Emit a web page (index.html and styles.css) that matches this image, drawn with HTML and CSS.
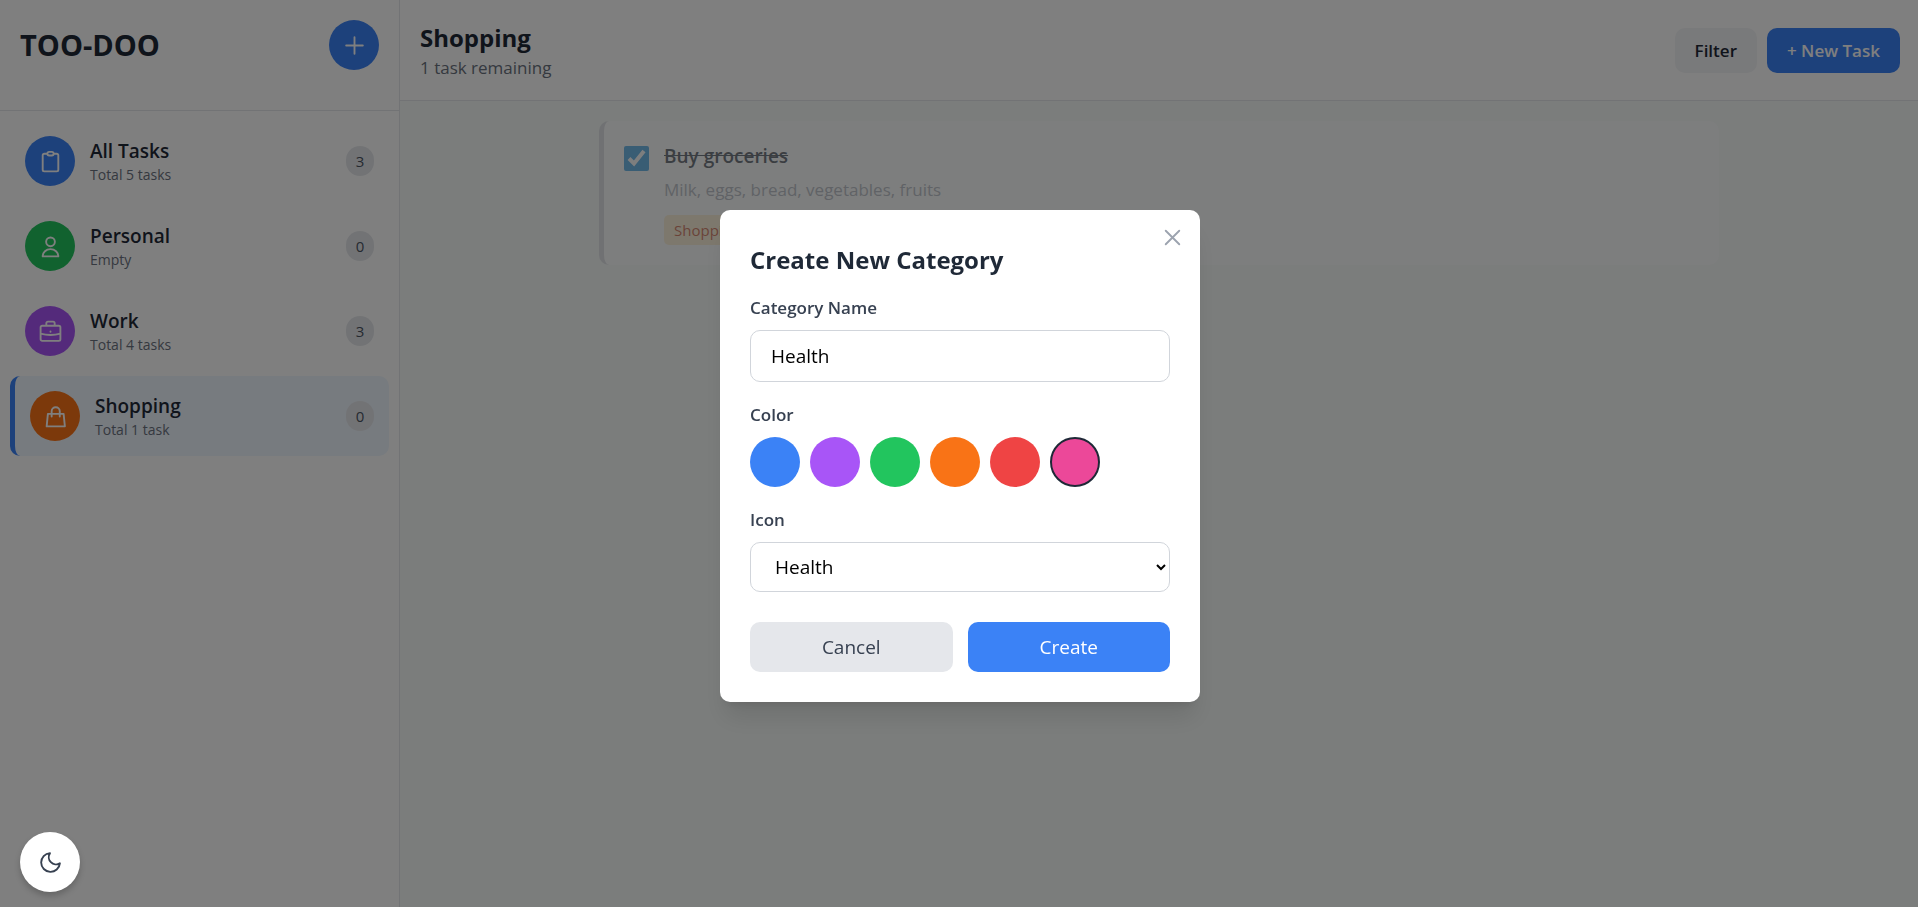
FILE: index.html
```html
<!DOCTYPE html>
<html lang="en">
<head>
    <meta charset="UTF-8">
    <meta name="viewport" content="width=device-width, initial-scale=1.0">
    <title>TOO-DOO</title>
    <link rel="stylesheet" href="styles.css">
</head>
<body>
    <div class="app">
        <aside class="sidebar">
            <div class="sidebar-header">
                <h1>TOO-DOO</h1>
                <button class="add-category" type="button" aria-label="Add category">
                    <svg class="icon" viewBox="0 0 24 24"><path d="M12 4v16m8-8H4"/></svg>
                </button>
            </div>
            <nav class="category-list">
                <a class="category" href="#all">
                    <span class="category-icon blue">
                        <svg class="icon" viewBox="0 0 24 24"><path d="M9 4.500H6A1.500 1.500 0 0 0 4.500 6v14A1.500 1.500 0 0 0 6 21.500h12a1.500 1.500 0 0 0 1.500-1.500V6A1.500 1.500 0 0 0 18 4.500h-3M10.700 2.800h2.600a1.700 1.700 0 0 1 0 3.400h-2.600a1.700 1.700 0 0 1 0-3.400z"/></svg>
                    </span>
                    <span class="category-text">
                        <span class="category-name">All Tasks</span>
                        <span class="category-total">Total 5 tasks</span>
                    </span>
                    <span class="count">3</span>
                </a>
                <a class="category" href="#personal">
                    <span class="category-icon green">
                        <svg class="icon" viewBox="0 0 24 24"><circle cx="12" cy="7.500" r="4.200"/><path d="M4.500 21.500c0-4 3.300-7 7.500-7s7.500 3 7.500 7z"/></svg>
                    </span>
                    <span class="category-text">
                        <span class="category-name">Personal</span>
                        <span class="category-total">Empty</span>
                    </span>
                    <span class="count">0</span>
                </a>
                <a class="category" href="#work">
                    <span class="category-icon purple">
                        <svg class="icon" viewBox="0 0 24 24"><path d="M4 6.500h16A1.500 1.500 0 0 1 21.500 8v11.500A1.500 1.500 0 0 1 20 21H4a1.500 1.500 0 0 1-1.500-1.500V8A1.500 1.500 0 0 1 4 6.500zM8 6.500V4a1.500 1.500 0 0 1 1.500-1.500h5A1.500 1.500 0 0 1 16 4v2.500M2.500 14c6 1.700 13 1.700 19 0M12 12v.200"/></svg>
                    </span>
                    <span class="category-text">
                        <span class="category-name">Work</span>
                        <span class="category-total">Total 4 tasks</span>
                    </span>
                    <span class="count">3</span>
                </a>
                <a class="category active" href="#shopping">
                    <span class="category-icon orange">
                        <svg class="icon" viewBox="0 0 24 24"><path d="M4.700 9.500h15.100l1.200 12H3.500zM8.300 12V7a3.900 3.900 0 0 1 7.800 0v5"/></svg>
                    </span>
                    <span class="category-text">
                        <span class="category-name">Shopping</span>
                        <span class="category-total">Total 1 task</span>
                    </span>
                    <span class="count">0</span>
                </a>
            </nav>
        </aside>

        <main class="main">
            <header class="main-header">
                <div>
                    <h2>Shopping</h2>
                    <p>1 task remaining</p>
                </div>
                <div class="header-actions">
                    <button class="filter" type="button">Filter</button>
                    <button class="new-task" type="button">+ New Task</button>
                </div>
            </header>
            <section class="tasks">
                <article class="task done">
                    <input type="checkbox" id="task1" checked>
                    <div>
                        <label class="task-title" for="task1">Buy groceries</label>
                        <p class="task-note">Milk, eggs, bread, vegetables, fruits</p>
                        <span class="tag">Shopping</span>
                    </div>
                </article>
            </section>
        </main>
    </div>

    <div class="overlay">
        <form class="modal">
            <button class="close" type="button" aria-label="Close">
                <svg class="icon" viewBox="0 0 24 24"><path d="M5.500 18.500l13-13M5.500 5.500l13 13"/></svg>
            </button>
            <h2>Create New Category</h2>
            <label class="field-label" for="categoryName">Category Name</label>
            <input class="field" type="text" id="categoryName" value="Health">
            <span class="field-label">Color</span>
            <div class="colors">
                <button class="swatch blue" type="button" aria-label="Blue"></button>
                <button class="swatch purple" type="button" aria-label="Purple"></button>
                <button class="swatch green" type="button" aria-label="Green"></button>
                <button class="swatch orange" type="button" aria-label="Orange"></button>
                <button class="swatch red" type="button" aria-label="Red"></button>
                <button class="swatch pink selected" type="button" aria-label="Pink"></button>
            </div>
            <label class="field-label" for="categoryIcon">Icon</label>
            <select class="field" id="categoryIcon">
                <option>Personal</option>
                <option>Work</option>
                <option>Shopping</option>
                <option selected>Health</option>
            </select>
            <div class="modal-actions">
                <button class="cancel" type="button">Cancel</button>
                <button class="create" type="submit">Create</button>
            </div>
        </form>
    </div>

    <button class="theme-toggle" type="button" aria-label="Toggle dark mode">
        <svg class="icon" viewBox="0 0 24 24"><path d="M21 12.800A9 9 0 1 1 11.500 3 7 7 0 0 0 21 12.800z"/></svg>
    </button>
</body>
</html>
```

FILE: styles.css
```css
* {
    box-sizing: border-box;
    margin: 0;
    padding: 0;
}

body {
    font-family: "Segoe UI", "Open Sans", "Noto Sans", sans-serif;
    font-size: 19px;
    line-height: 30px;
    color: #1f2937;
}

button, input, select {
    font: inherit;
    color: inherit;
    border: none;
}

button {
    cursor: pointer;
}

a {
    color: inherit;
    text-decoration: none;
}

.icon {
    width: 25px;
    height: 25px;
    fill: none;
    stroke: currentColor;
    stroke-width: 1.8;
    stroke-linecap: round;
    stroke-linejoin: round;
}

.blue { background-color: #3b82f6; }
.purple { background-color: #a855f7; }
.green { background-color: #22c55e; }
.orange { background-color: #f97316; }
.red { background-color: #ef4444; }
.pink { background-color: #ec4899; }

.app {
    display: flex;
    min-height: 100vh;
    background-color: #f7faf9;
}

/* Sidebar */
.sidebar {
    width: 400px;
    flex-shrink: 0;
    background-color: #fff;
    border-right: 1px solid #e5e7eb;
}

.sidebar-header {
    display: flex;
    justify-content: space-between;
    align-items: flex-start;
    padding: 20px 20px 40px;
    border-bottom: 1px solid #e5e7eb;
}

.sidebar-header h1 {
    font-size: 29px;
    line-height: 50px;
    font-weight: 700;
}

.add-category {
    display: flex;
    align-items: center;
    justify-content: center;
    width: 50px;
    height: 50px;
    border-radius: 50%;
    background-color: #3b82f6;
    color: #fff;
}

.category-list {
    display: flex;
    flex-direction: column;
    gap: 5px;
    padding: 10px;
}

.category {
    display: flex;
    align-items: center;
    gap: 15px;
    padding: 15px;
    border-radius: 10px;
}

.category.active {
    background-color: #eff6ff;
    border-left: 5px solid #3b82f6;
}

.category-icon {
    display: flex;
    align-items: center;
    justify-content: center;
    width: 50px;
    height: 50px;
    border-radius: 50%;
    color: #fff;
}

.category-text {
    display: flex;
    flex: 1;
    flex-direction: column;
}

.category-name {
    font-weight: 600;
    line-height: 28px;
}

.category-total {
    font-size: 14px;
    line-height: 20px;
    color: #6b7280;
}

.count {
    width: 28px;
    font-size: 15px;
    text-align: center;
    border-radius: 15px;
    background-color: #e5e7eb;
    color: #4b5563;
}

/* Main */
.main {
    flex: 1;
}

.main-header {
    display: flex;
    justify-content: space-between;
    align-items: center;
    padding: 20px 18px 20px 20px;
    background-color: #fff;
    border-bottom: 1px solid #e5e7eb;
}

.main-header h2 {
    font-size: 24px;
    line-height: 35px;
    font-weight: 700;
}

.main-header p {
    font-size: 17px;
    line-height: 25px;
    color: #6b7280;
}

.header-actions {
    display: flex;
    gap: 10px;
}

.header-actions button {
    padding: 10px 20px;
    font-size: 17px;
    line-height: 25px;
    font-weight: 600;
    border-radius: 10px;
}

.header-actions .filter {
    background-color: #f3f4f6;
}

.header-actions .new-task {
    background-color: #3b82f6;
    color: #fff;
}

.tasks {
    max-width: 1160px;
    margin: 0 auto;
    padding: 20px;
}

.task {
    display: flex;
    gap: 15px;
    padding: 20px;
    background-color: #fff;
    border-left: 5px solid #d1d5db;
    border-radius: 10px;
}

.task.done {
    opacity: 0.6;
}

.task input {
    width: 25px;
    height: 25px;
    margin-top: 5px;
    accent-color: #1a90e0;
}

.task-title {
    font-weight: 600;
    text-decoration: line-through;
}

.task-note {
    margin-top: 4px;
    font-size: 17px;
    color: #9ca3af;
}

.tag {
    display: inline-block;
    margin-top: 10px;
    padding: 0 10px;
    font-size: 15px;
    border-radius: 5px;
    background-color: #fdecc8;
    color: #c03a14;
}

/* Modal */
.overlay {
    position: fixed;
    inset: 0;
    display: flex;
    align-items: center;
    justify-content: center;
    padding: 5px 0 0 2px;
    background-color: rgba(0, 0, 0, 0.5);
}

.modal {
    position: relative;
    display: flex;
    flex-direction: column;
    width: 480px;
    padding: 30px;
    background-color: #fff;
    border-radius: 10px;
    box-shadow: 0 20px 25px -5px rgba(0, 0, 0, 0.1), 0 8px 10px -6px rgba(0, 0, 0, 0.1);
}

.modal h2 {
    margin-bottom: 15px;
    font-size: 24px;
    line-height: 40px;
    font-weight: 700;
}

.close {
    position: absolute;
    top: 15px;
    right: 15px;
    display: flex;
    background: none;
    color: #9ca3af;
}

.field-label {
    margin-bottom: 10px;
    font-size: 17px;
    line-height: 25px;
    font-weight: 600;
    color: #374151;
}

.field {
    width: 100%;
    height: 52px;
    margin-bottom: 20px;
    padding: 0 20px;
    background-color: #fff;
    border: 1px solid #d1d5db;
    border-radius: 10px;
    color: #000;
}

select.field {
    height: 50px;
}

.colors {
    display: flex;
    gap: 10px;
    margin-bottom: 20px;
}

.swatch {
    width: 50px;
    height: 50px;
    border-radius: 50%;
}

.swatch.selected {
    border: 2px solid #1f2937;
}

.modal-actions {
    display: flex;
    gap: 15px;
    margin-top: 10px;
}

.modal-actions button {
    flex: 1;
    padding: 10px;
    border-radius: 10px;
}

.cancel {
    background-color: #e5e7eb;
    color: #374151;
}

.modal-actions .create {
    background-color: #3b82f6;
    color: #fff;
}

.theme-toggle {
    position: fixed;
    left: 20px;
    bottom: 15px;
    display: flex;
    align-items: center;
    justify-content: center;
    width: 60px;
    height: 60px;
    border-radius: 50%;
    background-color: #fff;
    color: #374151;
    box-shadow: 0 4px 6px rgba(0, 0, 0, 0.2);
}
```
